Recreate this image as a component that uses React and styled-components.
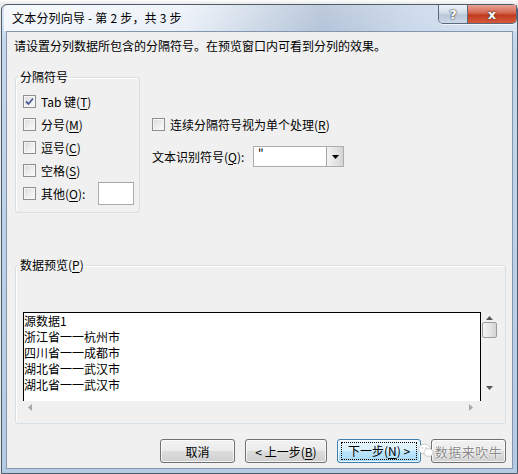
import React from "react";
import styled, { createGlobalStyle } from "styled-components";

const GlobalStyle = createGlobalStyle`
  html, body {
    margin: 0;
    padding: 0;
  }
  body {
    background: #f4f5f7;
    font-family: "Noto Sans CJK SC", "Liberation Sans", sans-serif;
    font-size: 12px;
    color: #000;
  }
`;

const Desktop = styled.div`
  width: 518px;
  height: 474px;
  box-sizing: border-box;
  padding: 4px 0 0 1px;
  overflow: hidden;
  background: linear-gradient(#fdfdfd, #e8e8e8 4px);
`;

const Window = styled.div`
  width: 517px;
  height: 470px;
  box-sizing: border-box;
  display: flex;
  flex-direction: column;
  padding: 0 4px 4px 4px;
  border: 1px solid #4f5c6b;
  border-radius: 6px 6px 0 0;
  background: linear-gradient(180deg, #dfe8f3 0%, #c4d6eb 40px, #b4cbe4 100%);
`;

const TitleBar = styled.div`
  height: 26px;
  flex: none;
  display: flex;
  align-items: flex-start;
  margin: 0 -4px 0 -2px;
  border-radius: 5px 5px 0 0;
  background: linear-gradient(
    90deg,
    rgba(255, 255, 255, 0.75) 0%,
    rgba(255, 255, 255, 0.55) 35%,
    rgba(150, 168, 192, 0.45) 62%,
    rgba(200, 214, 232, 0.6) 80%,
    rgba(225, 235, 246, 0.6) 100%
  );
`;

const Title = styled.span`
  align-self: center;
  margin-left: 8px;
  font-size: 12px;
  line-height: 16px;
  color: #000;
  letter-spacing: 0.2px;
`;

const CaptionGroup = styled.div`
  margin-left: auto;
  display: flex;
  border: 1px solid #5d6a7b;
  border-top: none;
  border-radius: 0 0 5px 5px;
  overflow: hidden;
  box-shadow: 0 1px 0 rgba(255, 255, 255, 0.7);
`;

const CaptionButton = styled.div`
  width: ${(p) => p.$w}px;
  height: 18px;
  display: flex;
  align-items: center;
  justify-content: center;
  background: ${(p) =>
    p.$close
      ? "linear-gradient(#e8a294 0%, #d4654f 45%, #c33b1f 55%, #d5593c 100%)"
      : "linear-gradient(#eef3f9 0%, #d2dce8 45%, #b9c7d8 55%, #cbd8e8 100%)"};
  border-left: ${(p) => (p.$close ? "1px solid #5d6a7b" : "none")};
  color: #fff;
  font-family: "DejaVu Sans", sans-serif;
  font-weight: bold;
  font-size: 13px;
  text-shadow: 0 0 2px #333, 0 0 1px #222;
`;

const Client = styled.div`
  flex: 1;
  display: flex;
  flex-direction: column;
  border: 1px solid #8496ad;
  background: #f0f0f0;
`;

const Intro = styled.p`
  margin: 6px 0 0 7px;
  line-height: 16px;
`;

const OptionsRow = styled.div`
  display: flex;
  margin-top: 15px;
`;

const GroupBox = styled.fieldset`
  box-sizing: border-box;
  width: ${(p) => p.$w}px;
  height: ${(p) => p.$h}px;
  margin: 0 0 0 8px;
  padding: ${(p) => p.$pt}px 0 0 2px;
  border: 1px solid #d5dfe5;
  border-radius: 3px;
  box-shadow: inset 1px 1px 0 #fff;
  min-width: 0;
`;

const Legend = styled.legend`
  padding: 0 2px;
  line-height: 16px;
  font-size: 12px;
`;

const Key = styled.u`
  text-decoration: underline;
  text-underline-offset: 2px;
`;

const CheckList = styled.div`
  display: flex;
  flex-direction: column;
  margin-left: 5px;
`;

const CheckRow = styled.label`
  display: flex;
  align-items: center;
  gap: 5px;
  height: ${(p) => p.$h || 23}px;
`;

const Box = styled.span`
  width: 13px;
  height: 13px;
  box-sizing: border-box;
  flex: none;
  display: flex;
  align-items: center;
  justify-content: center;
  border: 1px solid #8e8f8f;
  background: linear-gradient(135deg, #d8d8d8 0%, #eeeeee 55%, #fcfcfc 100%);
  box-shadow: inset 0 0 0 1px #f6f6f6;
`;

const OtherInput = styled.span`
  width: 36px;
  height: 23px;
  box-sizing: border-box;
  margin: 0 5px 0 auto;
  border: 1px solid #abadb3;
  border-top-color: #a3a6ad;
  background: #fff;
`;

const SideColumn = styled.div`
  display: flex;
  flex-direction: column;
  margin: 47px 0 0 12px;
`;

const QualifierRow = styled.div`
  display: flex;
  align-items: center;
  margin-top: 14px;
`;

const FieldLabel = styled.span`
  width: 101px;
  line-height: 16px;
`;

const Combo = styled.div`
  width: 91px;
  height: 21px;
  box-sizing: border-box;
  display: flex;
  border: 1px solid #abadb3;
  background: #fff;
`;

const ComboText = styled.span`
  flex: 1;
  padding-left: 4px;
  line-height: 12px;
  font-size: 12px;
`;

const DropButton = styled.span`
  width: 16px;
  display: flex;
  align-items: center;
  justify-content: center;
  border-left: 1px solid #a5a5a5;
  background: linear-gradient(90deg, #f3f3f3 0%, #e4e4e4 50%, #d4d4d4 100%);
`;

const PreviewGroup = styled(GroupBox)`
  margin-top: 44px;
`;

const Preview = styled.div`
  display: grid;
  grid-template-columns: 458px 16px;
  grid-template-rows: 89px 12px;
  margin-left: 5px;
  width: 474px;
`;

const PreviewText = styled.div`
  border: 1px solid #000;
  border-bottom: none;
  background: #fff;
  overflow: hidden;
`;

const Line = styled.div`
  line-height: 16px;
  font-size: 12px;
  white-space: nowrap;
`;

const VScroll = styled.div`
  display: flex;
  flex-direction: column;
  align-items: center;
  padding-top: 4px;
  background: #f0f0f0;
`;

const Thumb = styled.div`
  width: 15px;
  height: 16px;
  box-sizing: border-box;
  margin: 2px 0 0 1px;
  border: 1px solid #9c9c9c;
  border-radius: 2px;
  background: linear-gradient(90deg, #f4f4f4 0%, #e6e6e6 50%, #d3d3d3 100%);
`;

const HScroll = styled.div`
  display: flex;
  align-items: center;
  justify-content: space-between;
  padding: 0 8px 0 5px;
  background: #f0f0f0;
`;

const ButtonRow = styled.div`
  display: flex;
  justify-content: flex-end;
  gap: 10px;
  margin: 15px 6px 0 0;
`;

const Button = styled.div`
  position: relative;
  width: ${(p) => p.$w}px;
  height: 24px;
  box-sizing: border-box;
  display: flex;
  align-items: center;
  justify-content: center;
  border: 1px solid ${(p) => (p.$focus ? "#3c7fb1" : "#707070")};
  border-radius: 3px;
  background: ${(p) =>
    p.$focus
      ? "linear-gradient(#eaf6fd 0%, #d9f0fc 50%, #bee6fd 50%, #a7d9f5 100%)"
      : "linear-gradient(#f2f2f2 0%, #ebebeb 50%, #dddddd 50%, #cfcfcf 100%)"};
  box-shadow: inset 0 0 0 1px rgba(255, 255, 255, 0.75);
  font-size: 12px;
`;

const FocusRing = styled.span`
  padding: 1px 6px;
  border: 1px dotted #000;
  line-height: 14px;
`;

const Watermark = styled.span`
  color: #8a8a8a;
  font-size: 13px;
  letter-spacing: 0.5px;
  text-shadow: 0 0 2px #fff, 0 0 2px #fff, 0 0 1px #fff;
`;

const WeChatBadge = styled.svg`
  position: absolute;
  left: -14px;
  top: 3px;
`;

const Check = () => (
  <svg width="9" height="9" viewBox="0 0 9 9">
    <path d="M1 4.5 L3.5 7 L8 1.5" fill="none" stroke="#4a5f97" strokeWidth="1.8" />
  </svg>
);

const Arrow = ({ dir, color = "#555" }) => {
  const pts = {
    up: "0,4 3.5,0 7,4",
    down: "0,0 3.5,4 7,0",
    left: "4,0 0,3.5 4,7",
    right: "0,0 4,3.5 0,7",
  }[dir];
  const horiz = dir === "left" || dir === "right";
  return (
    <svg width={horiz ? 4 : 7} height={horiz ? 7 : 4} viewBox={horiz ? "0 0 4 7" : "0 0 7 4"}>
      <polygon points={pts} fill={color} />
    </svg>
  );
};

const CheckItem = ({ checked, children, h }) => (
  <CheckRow $h={h}>
    <Box>{checked && <Check />}</Box>
    <span>{children}</span>
  </CheckRow>
);

const rows = ["源数据1", "浙江省一一杭州市", "四川省一一成都市", "湖北省一一武汉市", "湖北省一一武汉市"];

export default function App() {
  return (
    <>
      <GlobalStyle />
      <Desktop>
        <Window>
          <TitleBar>
            <Title>文本分列向导 - 第 2 步，共 3 步</Title>
            <CaptionGroup>
              <CaptionButton $w={28}>?</CaptionButton>
              <CaptionButton $w={48} $close>
                x
              </CaptionButton>
            </CaptionGroup>
          </TitleBar>
          <Client>
            <Intro>请设置分列数据所包含的分隔符号。在预览窗口内可看到分列的效果。</Intro>
            <OptionsRow>
              <GroupBox $w={125} $h={144} $pt={5}>
                <Legend>分隔符号</Legend>
                <CheckList>
                  <CheckItem checked>
                    Tab 键(<Key>T</Key>)
                  </CheckItem>
                  <CheckItem>
                    分号(<Key>M</Key>)
                  </CheckItem>
                  <CheckItem>
                    逗号(<Key>C</Key>)
                  </CheckItem>
                  <CheckItem>
                    空格(<Key>S</Key>)
                  </CheckItem>
                  <CheckRow>
                    <Box />
                    <span>
                      其他(<Key>O</Key>):
                    </span>
                    <OtherInput />
                  </CheckRow>
                </CheckList>
              </GroupBox>
              <SideColumn>
                <CheckItem h={16}>
                  连续分隔符号视为单个处理(<Key>R</Key>)
                </CheckItem>
                <QualifierRow>
                  <FieldLabel>
                    文本识别符号(<Key>Q</Key>):
                  </FieldLabel>
                  <Combo>
                    <ComboText>"</ComboText>
                    <DropButton>
                      <Arrow dir="down" color="#000" />
                    </DropButton>
                  </Combo>
                </QualifierRow>
              </SideColumn>
            </OptionsRow>
            <PreviewGroup $w={491} $h={167} $pt={39}>
              <Legend>
                数据预览(<Key>P</Key>)
              </Legend>
              <Preview>
                <PreviewText>
                  {rows.map((r, i) => (
                    <Line key={i}>{r}</Line>
                  ))}
                </PreviewText>
                <VScroll>
                  <Arrow dir="up" />
                  <Thumb />
                  <span style={{ flex: 1 }} />
                  <span style={{ marginBottom: 8 }}>
                    <Arrow dir="down" />
                  </span>
                </VScroll>
                <HScroll>
                  <Arrow dir="left" color="#a8a8a8" />
                  <Arrow dir="right" color="#a8a8a8" />
                </HScroll>
              </Preview>
            </PreviewGroup>
            <ButtonRow>
              <Button $w={75}>取消</Button>
              <Button $w={82}>
                &lt; 上一步(<Key>B</Key>)
              </Button>
              <Button $w={84} $focus>
                <FocusRing>
                  下一步(<Key>N</Key>) &gt;
                </FocusRing>
              </Button>
              <Button $w={75}>
                <WeChatBadge width="16" height="15" viewBox="0 0 16 15">
                  <ellipse cx="6.5" cy="6" rx="5.8" ry="4.8" fill="#fff" stroke="#c8c8c8" />
                  <ellipse cx="10.5" cy="9.5" rx="4.6" ry="3.8" fill="#fff" stroke="#c8c8c8" />
                  <circle cx="4.5" cy="5" r="0.8" fill="#bdbdbd" />
                  <circle cx="8" cy="5" r="0.8" fill="#bdbdbd" />
                </WeChatBadge>
                <Watermark>数据来吹牛</Watermark>
              </Button>
            </ButtonRow>
          </Client>
        </Window>
      </Desktop>
    </>
  );
}
